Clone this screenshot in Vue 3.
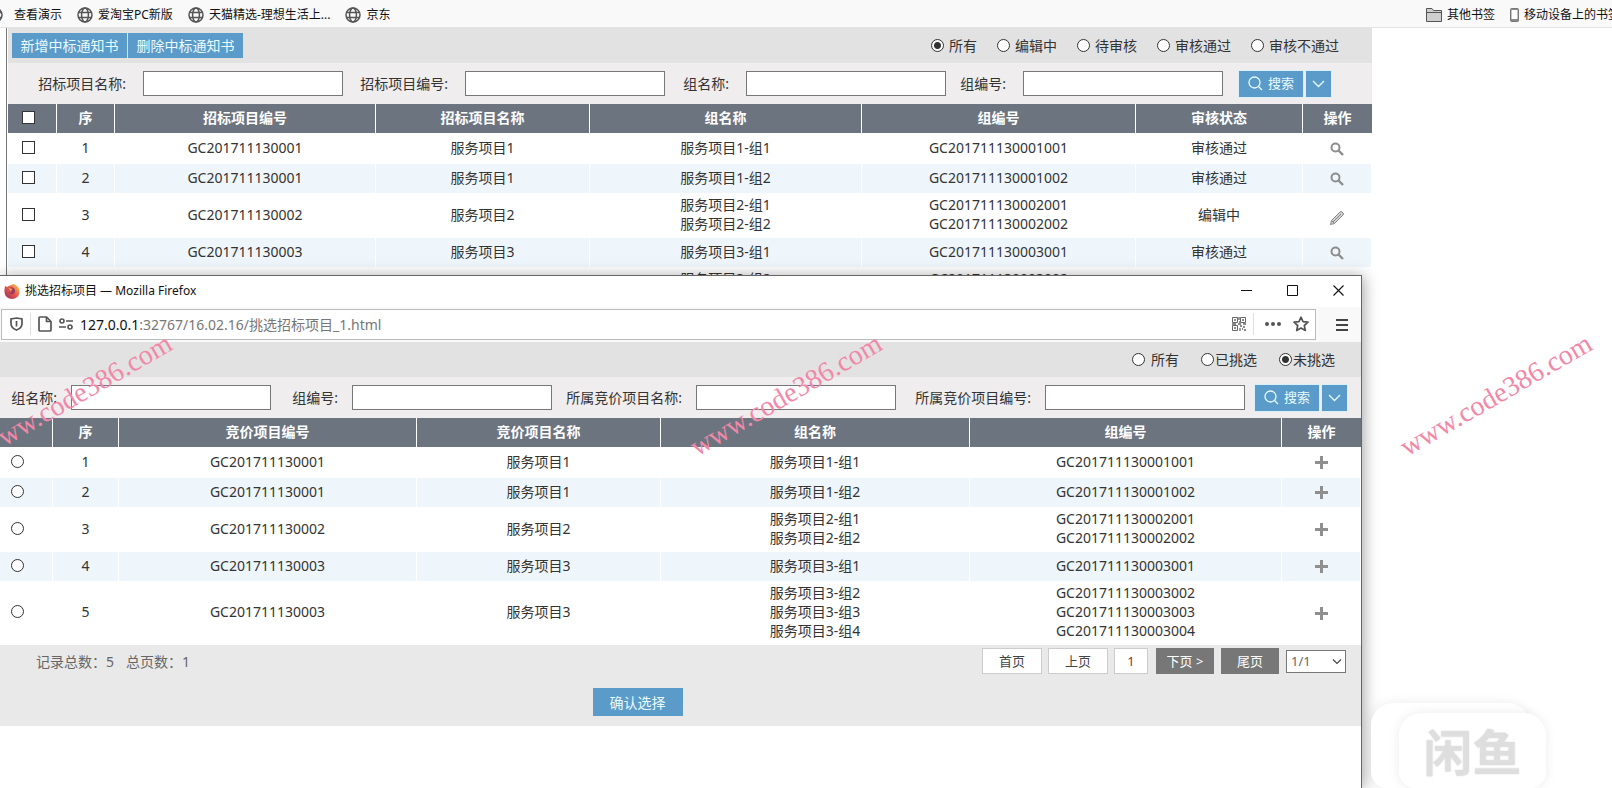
<template>
  <div class="screen">
    <nav class="bookmarks">
      <a v-for="item in bookmarks" :key="item" href="#" class="bookmark">
        <svg width="16" height="16" viewBox="0 0 16 16" fill="none" stroke="#555" stroke-width="1.5">
          <circle cx="8" cy="8" r="7"/>
          <ellipse cx="8" cy="8" rx="3.4" ry="7"/>
          <path d="M1.5 5.5h13M1.5 10.5h13"/>
        </svg>
        {{ item }}
      </a>
      <span class="spacer"></span>
      <a href="#" class="bookmark">
        <svg width="16" height="14" viewBox="0 0 16 14" fill="#cfcfcf" stroke="#555">
          <path d="M.5 13.5v-13h5.5l1.5 2h8v11z"/>
          <path d="M.5 4.5h15"/>
        </svg>
        其他书签
      </a>
      <a href="#" class="bookmark">
        <svg width="9" height="14" viewBox="0 0 9 14">
          <rect x=".5" y=".5" width="8" height="13" rx="1" fill="#888" stroke="#777"/>
          <rect x="1.5" y="2" width="6" height="9" fill="#fff"/>
        </svg>
        移动设备上的书签
      </a>
    </nav>

    <main class="page">
      <div class="toolbar">
        <div class="actions">
          <button type="button" class="btn">新增中标通知书</button>
          <button type="button" class="btn">删除中标通知书</button>
        </div>
        <div class="radios">
          <label v-for="item in statusList" :key="item">
            <input type="radio" name="status" :value="item" v-model="status">{{ item }}
          </label>
        </div>
      </div>
      <form class="filter notice-filter" @submit.prevent>
        <template v-for="(item, index) in noticeFields" :key="item">
          <label :for="'notice-' + index">{{ item }}:</label>
          <input type="text" :id="'notice-' + index">
        </template>
        <div class="search">
          <button type="submit" class="btn search-btn">
            <svg width="15" height="15" viewBox="0 0 15 15" fill="none" stroke="currentColor" stroke-width="1.3">
              <circle cx="6.5" cy="6.5" r="5.5"/><path d="M10.5 10.5l3.5 3.5"/>
            </svg>
            搜索
          </button>
          <button type="button" class="btn more-btn" aria-label="更多">
            <svg width="13" height="8" viewBox="0 0 13 8" fill="none" stroke="currentColor" stroke-width="1.3"><path d="M1 1l5.500 5.500L12 1"/></svg>
          </button>
        </div>
      </form>
      <table class="grid">
        <colgroup>
          <col v-for="(width, index) in noticeCols" :key="index" :style="{ width: width + 'px' }">
        </colgroup>
        <thead>
          <tr>
            <th class="pick"><input type="checkbox" aria-label="全选"></th>
            <th>序</th>
            <th>招标项目编号</th>
            <th>招标项目名称</th>
            <th>组名称</th>
            <th>组编号</th>
            <th>审核状态</th>
            <th>操作</th>
          </tr>
        </thead>
        <tbody>
          <tr v-for="(row, index) in rows" :key="index">
            <td class="pick"><input type="checkbox" :aria-label="'选择' + (index + 1)"></td>
            <td>{{ index + 1 }}</td>
            <td>{{ row.code }}</td>
            <td>{{ row.name }}</td>
            <td><div v-for="g in row.groups" :key="g">{{ row.name }}-组{{ g }}</div></td>
            <td><div v-for="g in row.groups" :key="g">{{ row.code }}00{{ g }}</div></td>
            <td>{{ row.status }}</td>
            <td>
              <button v-if="row.status === '编辑中'" type="button" class="icon-btn edit" aria-label="编辑">
                <svg width="16" height="16" viewBox="0 0 16 16" fill="#d4d4d4" stroke="#858585" stroke-linejoin="round">
                  <path d="M1.500 14.500l1-4L11 2q1-1 2 0l1 1q1 1 0 2l-8.500 8.500z"/>
                  <path d="M4 12l8-8M2.500 10.500l3 3" fill="none"/>
                </svg>
              </button>
              <button v-else type="button" class="icon-btn" aria-label="查看">
                <svg width="14" height="14" viewBox="0 0 14 14" fill="none" stroke="#8d8d8d">
                  <circle cx="5.500" cy="5.500" r="4" stroke-width="2"/>
                  <path d="M8.500 8.500l4.500 4.500" stroke-width="2.400"/>
                </svg>
              </button>
            </td>
          </tr>
        </tbody>
      </table>
    </main>

    <section class="popup">
      <header class="titlebar">
        <svg width="16" height="16" viewBox="0 0 16 16">
          <defs>
            <linearGradient id="fox" x1="1" y1="0" x2="0" y2="1">
              <stop offset="0" stop-color="#ffd24a"/>
              <stop offset=".5" stop-color="#e8584a"/>
              <stop offset="1" stop-color="#8f2f62"/>
            </linearGradient>
          </defs>
          <path d="M1 3l2 1c2-2 4-1 6-3 4 1 7 4 6.500 8A7.500 7 0 0 1 .5 9C.3 6 .8 5 1 3z" fill="url(#fox)"/>
          <path d="M5 5c3-2 6 0 6 3 0 4-6 4-6 1 1 1 3 0 3-1L5 7z" fill="#9a3a60"/>
          <path d="M4.500 5l4 1-2 2z" fill="#ffb36a"/>
        </svg>
        <span class="title">挑选招标项目 — Mozilla Firefox</span>
        <button type="button" class="win-btn" aria-label="最小化">
          <svg width="11" height="11" stroke="#111" fill="none"><path d="M0 5.500h11"/></svg>
        </button>
        <button type="button" class="win-btn" aria-label="最大化">
          <svg width="11" height="11" stroke="#111" fill="none"><path d="M.5.5h10v10H.5z"/></svg>
        </button>
        <button type="button" class="win-btn" aria-label="关闭">
          <svg width="11" height="11" stroke="#111" fill="none" stroke-width="1.100"><path d="M.5.5l10 10M10.500.5l-10 10"/></svg>
        </button>
      </header>
      <div class="navbar">
        <div class="urlbar">
          <svg width="13" height="14" viewBox="0 0 13 14" fill="none" stroke="#555" stroke-width="1.700">
            <path d="M6.500 1L12 2v4.500c0 3-2.500 5.500-5.500 6.500C3.500 12 1 9.500 1 6.500V2z"/>
            <path d="M6.500 4v5.500"/>
          </svg>
          <i class="line"></i>
          <svg width="14" height="16" viewBox="0 0 14 16" fill="none" stroke="#555" stroke-width="1.700" stroke-linejoin="round">
            <path d="M1 2q0-1 1-1h6.500L13 5.500V14q0 1-1 1H2q-1 0-1-1z"/>
            <path d="M8.500 1v4.500H13"/>
          </svg>
          <svg width="14" height="12" viewBox="0 0 14 12" fill="none" stroke="#555" stroke-width="1.600">
            <circle cx="3" cy="3" r="2"/><path d="M7 3h7M0 9h7"/><circle cx="11" cy="9" r="2"/>
          </svg>
          <div class="url"><b>127.0.0.1</b>:32767/16.02.16/挑选招标项目_1.html</div>
          <svg width="14" height="14" viewBox="0 0 14 14" fill="none" stroke="#666">
            <path d="M.5.5h5v5h-5zM8.500.5h5v5h-5zM.5 8.500h5v5h-5z"/>
            <path d="M2 3h2M10 3h2M2 11h2M7 0v3M6 7h3M0 7h4M11 7h3M8 9h2M11 10h2M8 11v3M10 12h1M12 13h2M7 5h1" stroke-width="1.300"/>
          </svg>
          <i class="line"></i>
          <svg class="dots" width="16" height="4" fill="#555"><circle cx="2" cy="2" r="2"/><circle cx="8" cy="2" r="2"/><circle cx="14" cy="2" r="2"/></svg>
          <svg width="16" height="16" viewBox="0 0 16 16" fill="none" stroke="#555" stroke-width="1.700" stroke-linejoin="round">
            <path d="M8 1.200l2 4.500 5 .5-3.700 3.300 1 5L8 12l-4.300 2.500 1-5L1 6.200l5-.5z"/>
          </svg>
        </div>
        <button type="button" class="menu-btn" aria-label="菜单">
          <svg width="12" height="14" stroke="#444" stroke-width="2"><path d="M0 2h12M0 7h12M0 12h12"/></svg>
        </button>
      </div>

      <div class="toolbar">
        <div class="radios picked">
          <label v-for="item in pickedList" :key="item">
            <input type="radio" name="picked" :value="item" v-model="picked">{{ item }}
          </label>
        </div>
      </div>
      <form class="filter pick-filter" @submit.prevent>
        <template v-for="(item, index) in pickFields" :key="item">
          <label :for="'pick-' + index">{{ item }}:</label>
          <input type="text" :id="'pick-' + index">
        </template>
        <div class="search">
          <button type="submit" class="btn search-btn">
            <svg width="15" height="15" viewBox="0 0 15 15" fill="none" stroke="currentColor" stroke-width="1.3">
              <circle cx="6.5" cy="6.5" r="5.5"/><path d="M10.5 10.5l3.5 3.5"/>
            </svg>
            搜索
          </button>
          <button type="button" class="btn more-btn" aria-label="更多">
            <svg width="13" height="8" viewBox="0 0 13 8" fill="none" stroke="currentColor" stroke-width="1.3"><path d="M1 1l5.500 5.500L12 1"/></svg>
          </button>
        </div>
      </form>
      <table class="grid">
        <colgroup>
          <col v-for="(width, index) in pickCols" :key="index" :style="{ width: width + 'px' }">
        </colgroup>
        <thead>
          <tr>
            <th></th>
            <th>序</th>
            <th>竞价项目编号</th>
            <th>竞价项目名称</th>
            <th>组名称</th>
            <th>组编号</th>
            <th>操作</th>
          </tr>
        </thead>
        <tbody>
          <tr v-for="(row, index) in rows" :key="index">
            <td class="pick"><input type="radio" name="project" :value="index" v-model="project" :aria-label="'选择' + (index + 1)"></td>
            <td>{{ index + 1 }}</td>
            <td>{{ row.code }}</td>
            <td>{{ row.name }}</td>
            <td><div v-for="g in row.groups" :key="g">{{ row.name }}-组{{ g }}</div></td>
            <td><div v-for="g in row.groups" :key="g">{{ row.code }}00{{ g }}</div></td>
            <td>
              <button type="button" class="icon-btn" aria-label="添加">
                <svg width="13" height="13" stroke="#8f8f8f" stroke-width="3"><path d="M6.500 0v13M0 6.500h13"/></svg>
              </button>
            </td>
          </tr>
        </tbody>
      </table>
      <footer class="footer">
        <div class="pager">
          <div class="total"><span>记录总数：5</span><span>总页数：1</span></div>
          <div class="light">
            <button type="button">首页</button>
            <button type="button">上页</button>
            <button type="button" class="current">1</button>
          </div>
          <div class="dark">
            <button type="button">下页 &gt;</button>
            <button type="button">尾页</button>
            <div class="select">
              <select aria-label="页码"><option>1/1</option></select>
              <svg width="10" height="6" viewBox="0 0 10 6" fill="none" stroke="#444" stroke-width="1.200"><path d="M1 .5l4 4 4-4"/></svg>
            </div>
          </div>
        </div>
        <div class="confirm">
          <button type="button" class="btn">确认选择</button>
        </div>
      </footer>
    </section>

    <div class="logo-back"></div>
    <div class="logo">闲鱼</div>
    <div class="marks">
      <span v-for="n in 3" :key="n">www.code386.com</span>
    </div>
  </div>
</template>

<script setup>
import { ref } from 'vue';

const bookmarks = ['查看演示', '爱淘宝PC新版', '天猫精选-理想生活上...', '京东'];

const statusList = ['所有', '编辑中', '待审核', '审核通过', '审核不通过'];
const status = ref('所有');
const noticeFields = ['招标项目名称', '招标项目编号', '组名称', '组编号'];
const noticeCols = [49, 58, 261, 214, 272, 274, 167, 69];

const pickedList = ['所有', '已挑选', '未挑选'];
const picked = ref('未挑选');
const pickFields = ['组名称', '组编号', '所属竞价项目名称', '所属竞价项目编号'];
const pickCols = [53, 66, 298, 244, 309, 312, 79];
const project = ref(null);

const rows = ref([
  { code: 'GC201711130001', name: '服务项目1', groups: [1], status: '审核通过' },
  { code: 'GC201711130001', name: '服务项目1', groups: [2], status: '审核通过' },
  { code: 'GC201711130002', name: '服务项目2', groups: [1, 2], status: '编辑中' },
  { code: 'GC201711130003', name: '服务项目3', groups: [1], status: '审核通过' },
  { code: 'GC201711130003', name: '服务项目3', groups: [2, 3, 4], status: '审核通过' }
]);
</script>

<style>
body {
  margin: 0;
  background: #fff;
}
</style>

<style scoped>
.screen {
  position: relative;
  height: 100vh;
  overflow: hidden;
  font: 14px/19px "Noto Sans", "Noto Sans CJK SC", sans-serif;
  color: #333;
}

.screen * {
  box-sizing: border-box;
}

svg {
  display: block;
  flex: none;
}

button,
input,
select {
  font: inherit;
  margin: 0;
}

button {
  padding: 0;
  border: 0;
  background: none;
  white-space: nowrap;
}

/* bookmarks */
.bookmarks {
  display: flex;
  align-items: center;
  gap: 15px;
  height: 28px;
  margin: 0 -8px 0 -13px;
  padding-top: 2px;
  background: #f9f9fa;
  border-bottom: 1px solid #e4e4e4;
  font-size: 12px;
}

.bookmark {
  display: flex;
  align-items: center;
  gap: 5px;
  color: #111;
  text-decoration: none;
  white-space: nowrap;
}

.bookmark:first-child {
  gap: 11px;
}

.spacer {
  flex: 1;
}

/* page */
.page {
  margin: 0 240px 0 6px;
  padding-left: 1px;
  border-left: 1px solid #777;
}

.toolbar {
  display: flex;
  align-items: center;
  height: 35px;
  padding-left: 4px;
  background: #e2e2e2;
}

.actions {
  display: flex;
  gap: 1px;
}

.btn {
  height: 25px;
  padding: 0;
  background: #5b9bc9;
  color: #e9fbff;
}

.actions .btn {
  width: 115px;
}

.radios {
  display: flex;
  gap: 20px;
  margin-left: auto;
  padding-right: 33px;
}

.radios label {
  display: flex;
  align-items: center;
  gap: 5px;
}

.picked {
  gap: 22px;
  padding-right: 26px;
}

.picked label {
  gap: 1px;
}

.picked label:first-child {
  gap: 6px;
}

input[type="checkbox"],
input[type="radio"] {
  display: block;
  appearance: none;
  width: 13px;
  height: 13px;
  background: #fff;
  border: 1px solid #333;
}

input[type="radio"] {
  border-radius: 50%;
}

input[type="radio"]:checked {
  background: radial-gradient(circle, #333 0 3px, #fff 4px);
}

.filter {
  display: grid;
  align-items: center;
  height: 41px;
  background: #efedee;
}

.notice-filter {
  grid-template-columns: 135px 200px 122px 200px 81px 200px 77px 200px 1fr;
}

.pick-filter {
  grid-template-columns: 71px 200px 81px 200px 144px 200px 149px 200px 1fr;
}

.filter label {
  padding-right: 17px;
  text-align: right;
}

.pick-filter label {
  padding-right: 14px;
}

.filter input {
  width: 100%;
  height: 25px;
  padding: 0 4px;
  border: 1px solid #777;
  background: #fff;
}

.search {
  display: flex;
  gap: 3px;
  padding-left: 16px;
}

.pick-filter .search {
  padding-left: 10px;
}

.search .btn {
  display: flex;
  align-items: center;
  justify-content: center;
  height: 26px;
  outline: 1px solid #d8f0fa;
}

.search-btn {
  gap: 5px;
  width: 64px;
  font-size: 13px;
}

.more-btn {
  width: 25px;
}

/* tables */
.grid {
  width: 100%;
  table-layout: fixed;
  border-collapse: separate;
  border-spacing: 0;
  text-align: center;
}

.grid th {
  height: 29px;
  padding: 0 0 2px;
  background: #6c7480;
  border-right: 1px solid #fff;
  color: #fff;
}

.grid th:last-child {
  border-right: 0;
}

.grid td {
  height: 29px;
  padding: 2px 0 5px;
  border-right: 1px solid #fff;
}

.grid tbody tr:first-child td {
  height: 31px;
}

.grid tbody tr:nth-child(even) td {
  background: #eff6fb;
}

.grid .pick {
  padding-left: 14px;
}

.popup .grid .pick {
  padding-left: 11px;
}

.icon-btn {
  display: block;
  margin: 3px auto 0;
}

.edit {
  margin-top: 7px;
}

/* popup window */
.popup {
  position: absolute;
  top: 275px;
  right: 250px;
  bottom: 0;
  left: 0;
  background: #fff;
  border-top: 1px solid #666;
  border-right: 1px solid #666;
  box-shadow: 2px 1px 14px rgba(0, 0, 0, 0.35);
}

.titlebar {
  display: flex;
  align-items: center;
  height: 31px;
  padding: 0 0 2px 4px;
  color: #111;
  font-size: 12px;
}

.title {
  flex: 1;
  padding-left: 5px;
}

.win-btn {
  display: flex;
  align-items: center;
  justify-content: center;
  width: 46px;
  height: 29px;
}

.navbar {
  display: flex;
  align-items: center;
  height: 35px;
  padding-left: 1px;
  background: #f9f9fa;
}

.urlbar {
  display: flex;
  flex: 1;
  align-items: center;
  gap: 7px;
  height: 31px;
  padding: 0 6px 1px 8px;
  background: #fff;
  border: 1px solid #bbb;
}

.line {
  width: 1px;
  height: 22px;
  background: #e0e0e0;
}

.dots {
  margin: 0 5px 0 4px;
}

.url {
  flex: 1;
  color: #777;
}

.url b {
  color: #111;
  font-weight: normal;
}

.menu-btn {
  display: flex;
  justify-content: center;
  width: 45px;
  padding-left: 7px;
}

.footer {
  height: 81px;
  padding-top: 3px;
  background: #e9e9e9;
}

.pager {
  display: flex;
  align-items: center;
  gap: 8px;
  padding: 0 15px 0 36px;
  font-size: 13px;
}

.total {
  display: flex;
  flex: 1;
  gap: 12px;
  color: #666;
  font-size: 14px;
}

.light,
.dark {
  display: flex;
  align-items: center;
  gap: 6px;
}

.dark {
  gap: 7px;
}

.light button {
  width: 60px;
  height: 26px;
  background: #fff;
  border: 1px solid #ccc;
  color: #444;
}

.light .current {
  width: 34px;
  color: #833;
}

.dark button {
  width: 58px;
  height: 26px;
  background: #777;
  color: #fff;
}

.select {
  position: relative;
}

.select select {
  display: block;
  appearance: none;
  width: 60px;
  height: 23px;
  padding: 0 4px;
  background: #fff;
  border: 1px solid #777;
  border-radius: 0;
  color: #666;
}

.select svg {
  position: absolute;
  top: 9px;
  right: 4px;
}

.confirm {
  display: flex;
  justify-content: center;
  padding: 14px 86px 0 0;
}

.confirm .btn {
  width: 90px;
  height: 28px;
}

/* corner logo */
.logo-back,
.logo {
  position: absolute;
  right: 82px;
  bottom: 0;
  width: 159px;
  height: 85px;
  background: #fff;
  border-radius: 22px 22px 16px 16px;
  box-shadow: 0 0 12px rgba(0, 0, 0, 0.08);
}

.logo {
  right: 66px;
  width: 147px;
  height: 75px;
  color: #dedede;
  font-size: 49px;
  font-weight: bold;
  line-height: 79px;
  text-align: center;
  text-shadow: 0 0 2px #ddd;
}

.marks span {
  position: absolute;
  top: 379px;
  left: 1387px;
  width: 218px;
  color: #f288a8;
  font: 28px/32px "Liberation Serif", serif;
  text-align: center;
  transform: rotate(-30deg);
}

.marks span:nth-child(1) {
  left: -33px;
}

.marks span:nth-child(2) {
  left: 677px;
}
</style>
